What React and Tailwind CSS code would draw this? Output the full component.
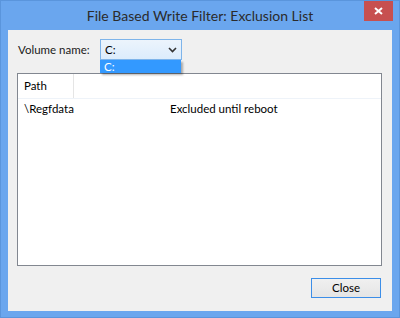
import React from "react";

const App = () => {
  return (
    <div
      className="w-[400px] h-[318px] bg-[#6aa6ee] border border-[#5a95dc] flex flex-col"
      style={{ fontFamily: "Lato, 'Noto Sans', sans-serif" }}
    >
      {/* title bar */}
      <div className="h-[29px] flex items-start">
        <div className="w-[35px]" />
        <div className="flex-1 text-center text-[14px] leading-[29px] text-[#2b2b2b]">
          File Based Write Filter: Exclusion List
        </div>
        <div className="w-[29px] h-[20px] mr-[6px] bg-[#c75050] flex items-center justify-center">
          <svg width="9" height="8" viewBox="0 0 9 8">
            <path d="M1 1 L8 7 M8 1 L1 7" stroke="white" strokeWidth="2" />
          </svg>
        </div>
      </div>

      {/* client area */}
      <div className="mx-[7px] h-[281px] bg-[#f0f0f0] flex flex-col pl-[10px] pr-[10px] pt-[9px] text-[11.5px] text-black">
        <div className="flex items-center h-[21px]">
          <span className="w-[82px] text-[#1a1a1a]">Volume name:</span>
          <div className="relative">
            <div className="w-[82px] h-[21px] border border-[#7eb4ea] bg-gradient-to-b from-[#ecf4fc] to-[#dcecfc] flex items-center justify-between px-[4px]">
              <span>C:</span>
              <svg width="9" height="6" viewBox="0 0 9 6">
                <path d="M1 1 L4.5 4.5 L8 1" stroke="#333" strokeWidth="1.6" fill="none" />
              </svg>
            </div>
            <div className="absolute left-0 top-[21px] w-[81px] h-[13px] bg-[#3399ff] text-white leading-[13px] px-[4px] shadow-[2px_2px_2px_rgba(0,0,0,0.3)]">
              C:
            </div>
          </div>
        </div>

        <div className="mt-[13px] ml-[-1px] w-[365px] h-[193px] border border-[#828790] bg-white flex flex-col">
          <div className="h-[25px] flex border-b border-[#eef3f9]">
            <div className="w-[56px] pl-[6px] flex items-center border-r border-[#e5e5e5]">Path</div>
            <div className="flex-1" />
          </div>
          <div className="flex h-[20px] items-center">
            <span className="w-[152px] pl-[6px]">\Regfdata</span>
            <span>Excluded until reboot</span>
          </div>
        </div>

        <div className="flex justify-end mt-[12px] pr-[1px]">
          <div className="w-[70px] h-[20px] border border-[#3c8ee8] bg-gradient-to-b from-[#f0f0f0] to-[#e5e5e5] flex items-center justify-center">
            Close
          </div>
        </div>
      </div>
    </div>
  );
};

export default App;
